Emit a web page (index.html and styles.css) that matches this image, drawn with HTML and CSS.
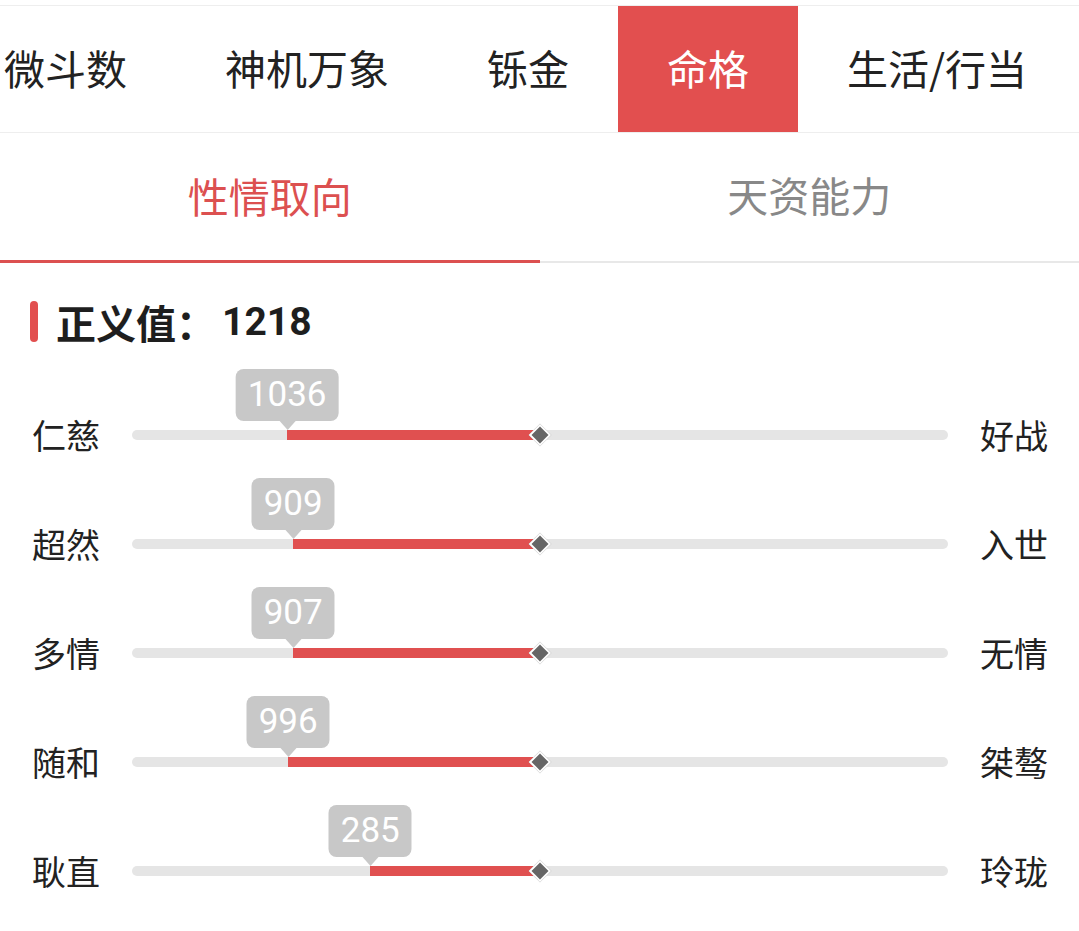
FILE: index.html
```html
<!DOCTYPE html>
<html lang="zh-CN">
<head>
    <meta charset="UTF-8">
    <meta name="viewport" content="width=device-width, initial-scale=1.0">
    <title>命格 - 性情取向</title>

    <link rel="stylesheet" href="styles.css">
</head>

<body>
    <!-- Main category tabs (scrolled a bit to the left) -->
    <nav class="tabs">
        <div class="tabs-strip">
            <a class="tab">微斗数</a>
            <a class="tab">神机万象</a>
            <a class="tab">铄金</a>
            <a class="tab active">命格</a>
            <a class="tab">生活/行当</a>
        </div>
    </nav>

    <!-- Sub tabs -->
    <div class="subtabs">
        <div class="subtab active">性情取向</div>
        <div class="subtab">天资能力</div>
    </div>

    <!-- Justice panel -->
    <section class="panel">
        <h2 class="panel-title">正义值：<span class="panel-value">1218</span></h2>

        <div class="rows">
            <div class="row">
                <span class="side">仁慈</span>
                <div class="track">
                    <div class="fill" style="left:19.02%;width:31.04%"></div>
                    <span class="bubble" style="left:19.02%">1036</span>
                    <span class="knob"></span>
                </div>
                <span class="side">好战</span>
            </div>

            <div class="row">
                <span class="side">超然</span>
                <div class="track">
                    <div class="fill" style="left:19.75%;width:30.31%"></div>
                    <span class="bubble" style="left:19.75%">909</span>
                    <span class="knob"></span>
                </div>
                <span class="side">入世</span>
            </div>

            <div class="row">
                <span class="side">多情</span>
                <div class="track">
                    <div class="fill" style="left:19.75%;width:30.31%"></div>
                    <span class="bubble" style="left:19.75%">907</span>
                    <span class="knob"></span>
                </div>
                <span class="side">无情</span>
            </div>

            <div class="row">
                <span class="side">随和</span>
                <div class="track">
                    <div class="fill" style="left:19.14%;width:30.92%"></div>
                    <span class="bubble" style="left:19.14%">996</span>
                    <span class="knob"></span>
                </div>
                <span class="side">桀骜</span>
            </div>

            <div class="row">
                <span class="side">耿直</span>
                <div class="track">
                    <div class="fill" style="left:29.2%;width:20.86%"></div>
                    <span class="bubble" style="left:29.2%">285</span>
                    <span class="knob"></span>
                </div>
                <span class="side">玲珑</span>
            </div>
        </div>
    </section>
</body>
</html>
```

FILE: styles.css
```css
/* General styling */
body, html {
    margin: 0;
    padding: 0;
    background: #fff;
    color: #222;
    font-family: "Noto Sans CJK SC", "Noto Sans", sans-serif;
}

/* Main tabs */
.tabs {
    margin-top: 5px;
    height: 126px;
    border-top: 1px solid #eeeeee;
    border-bottom: 1px solid #eeeeee;
    overflow: hidden;
}

.tabs-strip {
    display: flex;
    height: 100%;
    margin-left: -45px;
}

.tab {
    display: flex;
    align-items: center;
    padding: 0 49px 4px;
    font-size: 41px;
    white-space: nowrap;
    color: #222;
}

.tab.active {
    background-color: #e24f4f;
    color: #fff;
}

/* Sub tabs */
.subtabs {
    display: grid;
    grid-template-columns: 1fr 1fr;
    border-bottom: 2px solid #e8e8e8;
}

.subtab {
    height: 122px;
    padding-bottom: 6px;
    display: flex;
    align-items: center;
    justify-content: center;
    font-size: 41px;
    color: #888;
}

.subtab.active {
    color: #dc5050;
    box-shadow: inset 0 -3px 0 #dc5050;
    margin-bottom: -2px;
    height: 124px;
}

/* Panel */
.panel {
    padding-top: 38px;
}

.panel-title {
    display: flex;
    align-items: center;
    margin: 0;
    padding-left: 30px;
    height: 41px;
    font-family: "Noto Sans CJK TC", "Noto Sans CJK SC", sans-serif;
    font-size: 40px;
    font-weight: bold;
    color: #1e1e1e;
}

.panel-title::before {
    content: "";
    width: 8px;
    height: 41px;
    margin-right: 18px;
    border-radius: 4px;
    background-color: #e24f4f;
}

.panel-value {
    margin-left: 6px;
    font-family: Roboto, "Noto Sans", sans-serif;
    font-size: 39px;
}

.rows {
    margin-top: 38px;
}

.row {
    display: flex;
    align-items: center;
    gap: 32px;
    height: 109px;
    padding: 0 31px 0 32px;
}

.side {
    width: 68px;
    font-size: 34px;
    color: #222;
    white-space: nowrap;
}

.track {
    position: relative;
    flex: 1;
    height: 10px;
    border-radius: 5px;
    background-color: #e5e5e5;
}

.fill {
    position: absolute;
    top: 0;
    bottom: 0;
    background-color: #e05050;
}

.bubble {
    position: absolute;
    bottom: 19px;
    transform: translateX(-50%);
    height: 52px;
    line-height: 52px;
    padding: 0 12px;
    border-radius: 8px;
    background-color: #c8c8c8;
    color: #fff;
    font-family: Roboto, "Noto Sans", sans-serif;
    font-size: 35px;
    white-space: nowrap;
}

.bubble::after {
    content: "";
    position: absolute;
    top: 100%;
    left: 50%;
    margin-left: -8px;
    border-left: 8px solid transparent;
    border-right: 8px solid transparent;
    border-top: 9px solid #c8c8c8;
}

.knob {
    position: absolute;
    left: 50%;
    top: 50%;
    width: 12px;
    height: 12px;
    border: 2px solid #fff;
    background-color: #666;
    transform: translate(-50%, -50%) rotate(45deg);
}
```
